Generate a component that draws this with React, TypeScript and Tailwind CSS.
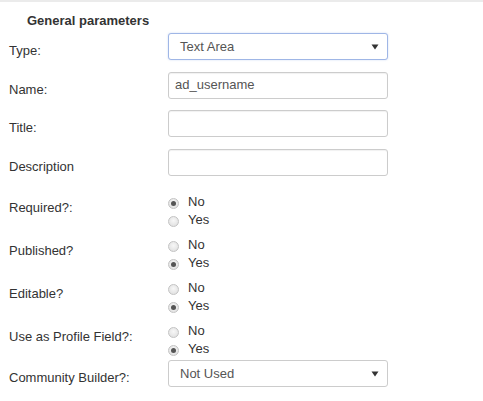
import type { ReactNode } from 'react';

const FONT = "font-['Liberation_Sans',Arial,sans-serif]";

function Row({ label, top, children }: { label: string; top: string; children: ReactNode }) {
  return (
    <div className="flex">
      <div className={`w-[159px] shrink-0 text-[13px] leading-[18px] text-[#333] ${top}`}>{label}</div>
      <div className="w-[220px]">{children}</div>
    </div>
  );
}

function Select({ value, focused }: { value: string; focused?: boolean }) {
  return (
    <div
      className={`flex h-[27px] items-center justify-between rounded-[3px] border bg-white pl-[11px] pr-[7px] text-[13px] text-[#555] ${
        focused ? 'border-[#9fb6e6] shadow-[0_0_2px_rgba(102,140,220,0.35)]' : 'border-[#ccc]'
      }`}
    >
      <span>{value}</span>
      <svg width="8" height="6" viewBox="0 0 8 6" className="mr-[1px]">
        <path d="M0.5 0.5h7L4 5.5z" fill="#333" />
      </svg>
    </div>
  );
}

function Input({ value }: { value?: string }) {
  return (
    <div className="flex h-[27px] items-center rounded-[3px] border border-[#ccc] bg-white px-[6px] pb-[1px] text-[13px] text-[#555] shadow-[inset_0_1px_1px_rgba(0,0,0,0.06)]">
      {value}
    </div>
  );
}

function Radio({ label, checked }: { label: string; checked?: boolean }) {
  return (
    <div className="flex h-[18.5px] leading-[18.5px]">
      <span className="mt-[5px] flex h-[11px] w-[11px] items-center justify-center rounded-full border border-[#c3c3c3] bg-[radial-gradient(circle_at_50%_40%,#f7f7f7,#dcdcdc)]">
        {checked && <span className="h-[5px] w-[5px] rounded-full bg-[#555]" />}
      </span>
      <span className="ml-[9px] text-[13px] text-[#333]">{label}</span>
    </div>
  );
}

function YesNo({ yes }: { yes: boolean }) {
  return (
    <div>
      <Radio label="No" checked={!yes} />
      <Radio label="Yes" checked={yes} />
    </div>
  );
}

export default function App() {
  return (
    <div className={`h-[401px] w-[483px] overflow-hidden border-t-2 border-[#ebebeb] bg-white pl-[9px] ${FONT}`}>
      <div className="pl-[18px] pt-[10px] text-[13px] font-bold leading-[18px] text-[#333]">General parameters</div>

      <div className="mt-[3px]">
        <Row label="Type:" top="pt-[9px]">
          <Select value="Text Area" focused />
        </Row>
      </div>
      <div className="mt-[12px]">
        <Row label="Name:" top="pt-[9px]">
          <Input value="ad_username" />
        </Row>
      </div>
      <div className="mt-[11px]">
        <Row label="Title:" top="pt-[9px]">
          <Input />
        </Row>
      </div>
      <div className="mt-[12px]">
        <Row label="Description" top="pt-[9px]">
          <Input />
        </Row>
      </div>

      <div className="mt-[16.5px]">
        <Row label="Required?:" top="pt-[6px]">
          <YesNo yes={false} />
        </Row>
      </div>
      <div className="mt-[6px]">
        <Row label="Published?" top="pt-[6px]">
          <YesNo yes />
        </Row>
      </div>
      <div className="mt-[6px]">
        <Row label="Editable?" top="pt-[6px]">
          <YesNo yes />
        </Row>
      </div>
      <div className="mt-[6px]">
        <Row label="Use as Profile Field?:" top="pt-[6px]">
          <YesNo yes />
        </Row>
      </div>

      <div className="mt-[1.5px]">
        <Row label="Community Builder?:" top="pt-[8.5px]">
          <Select value="Not Used" />
        </Row>
      </div>
    </div>
  );
}
